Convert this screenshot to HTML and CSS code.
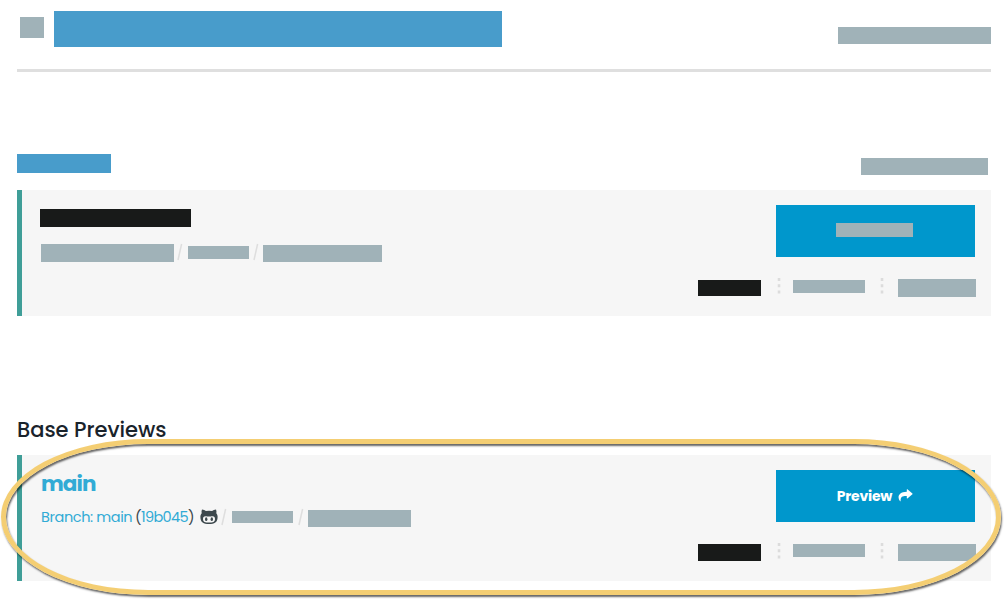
FILE: index.html
```html
<!DOCTYPE html>
<html lang="en">
<head>
<meta charset="utf-8">
<title>Base Previews</title>
<link rel="stylesheet" href="styles.css">
</head>
<body>
<main class="page">
  <header class="header">
    <div class="bar header-icon"></div>
    <div class="bar blue header-title"></div>
    <div class="bar header-link"></div>
  </header>
  <div class="section-head">
    <div class="bar blue section-title"></div>
    <div class="bar section-link"></div>
  </div>
  <section class="card">
    <div class="info">
      <div class="bar dark card-title"></div>
      <div class="meta">
        <div class="bar meta-branch"></div>
        <svg class="slash" width="6" height="18" viewBox="0 0 6 18"><path d="M1 17 4.6 1"/></svg>
        <div class="bar meta-commit"></div>
        <svg class="slash slash-second" width="6" height="18" viewBox="0 0 6 18"><path d="M1 17 4.6 1"/></svg>
        <div class="bar meta-date"></div>
      </div>
    </div>
    <div class="side">
      <div class="button"><div class="bar button-bar"></div></div>
      <div class="actions">
        <div class="bar dark action-first"></div>
        <svg class="dots" width="4" height="18" viewBox="0 0 4 18"><path d="M2 1v3M2 7.2v3M2 13.4v3"/></svg>
        <div class="bar action-second"></div>
        <svg class="dots dots-second" width="4" height="18" viewBox="0 0 4 18"><path d="M2 1v3M2 7.2v3M2 13.4v3"/></svg>
        <div class="bar action-third"></div>
      </div>
    </div>
  </section>
  <h2 class="heading">Base Previews</h2>
  <section class="card base-card">
    <div class="info">
      <h3 class="branch-name">main</h3>
      <div class="meta base-meta">
        <span class="branch">Branch: main</span>
        <span class="commit"><span class="paren">(</span>19b045<span class="paren">)</span></span>
        <svg class="octoface" width="18" height="16" viewBox="0 0 18 16"><path fill="#3d484d" fill-rule="evenodd" d="M2 .5C3.4 .5 4.9 1.3 5.9 2.1Q9 1.5 12.1 2.1C13.1 1.3 14.6 .5 16 .5Q16.8 2.3 16.3 4.2C17.4 5.5 17.7 6.7 17.6 8.3C17.5 13.5 14.5 15 9 15S.5 13.5 .4 8.3C.3 6.7 .6 5.5 1.7 4.2Q1.2 2.3 2 .5ZM5.5 7.2C3.6 7.2 3 8.6 3 10C3 13 5.2 13.5 9 13.5S15 13 15 10C15 8.6 14.4 7.2 12.5 7.2C11 7.2 10.5 7.5 9 7.5S7 7.2 5.5 7.2Z"/><ellipse cx="6.2" cy="10.2" rx="1.2" ry="1.9" fill="#3d484d"/><ellipse cx="11.8" cy="10.2" rx="1.2" ry="1.9" fill="#3d484d"/></svg>
        <svg class="slash" width="6" height="18" viewBox="0 0 6 18"><path d="M1 17 4.6 1"/></svg>
        <div class="bar meta-commit"></div>
        <svg class="slash slash-second" width="6" height="18" viewBox="0 0 6 18"><path d="M1 17 4.6 1"/></svg>
        <div class="bar meta-date"></div>
      </div>
    </div>
    <div class="side">
      <div class="button"><span class="button-label">Preview</span><svg class="share" width="15" height="13" viewBox="0 0 15 13"><path fill="#fff" d="M8.8 .5Q8.8 0 9.4 .3L14.4 4.5Q14.8 4.9 14.4 5.3L9.4 9.4Q8.8 9.7 8.8 9.1V7C4.5 6.9 2.5 7.5 2.6 11.9Q2.5 12.5 1.9 12C-.8 8.5 .1 3.1 8.8 2.8Z"/></svg></div>
      <div class="actions">
        <div class="bar dark action-first"></div>
        <svg class="dots" width="4" height="18" viewBox="0 0 4 18"><path d="M2 1v3M2 7.2v3M2 13.4v3"/></svg>
        <div class="bar action-second"></div>
        <svg class="dots dots-second" width="4" height="18" viewBox="0 0 4 18"><path d="M2 1v3M2 7.2v3M2 13.4v3"/></svg>
        <div class="bar action-third"></div>
      </div>
    </div>
  </section>
  <div class="highlight"></div>
</main>
</body>
</html>
```
FILE: styles.css
```css
* { box-sizing: border-box; }
body { margin: 0; background: #fff; font-family: Poppins, Inter, sans-serif; }
.page { position: relative; width: 1008px; height: 601px; padding: 0 17px; overflow: hidden; }
.bar { flex: none; background: #a0b2b8; }
.blue { background: #489ccb; }
.dark { background: #181a19; }
.header { display: flex; align-items: flex-start; height: 72px; border-bottom: 3px solid #dfdfdf; width: 974px; }
.header-icon { width: 24px; height: 21px; margin: 17px 0 0 3px; }
.header-title { width: 448px; height: 36px; margin: 11px 0 0 10px; }
.header-link { width: 153px; height: 17px; margin: 27px 0 0 auto; }
.section-head { display: flex; justify-content: space-between; align-items: flex-start; width: 971px; height: 118px; padding-top: 82px; }
.section-title { width: 94px; height: 19px; }
.section-link { width: 127px; height: 17px; margin-top: 4px; }
.card { display: flex; justify-content: space-between; width: 974px; height: 126px; padding: 15px 15px 0 18px; background: #f6f6f6; border-left: 5px solid #3f9e98; }
.card-title { width: 151px; height: 18px; margin-top: 4px; }
.meta { display: flex; align-items: flex-start; margin: 16px 0 0 1px; }
.meta-branch { width: 133px; height: 18px; margin-top: 1px; }
.slash { flex: none; margin-left: 3px; }
.slash-second { margin-left: 4px; }
.slash path { fill: none; stroke: #dedede; stroke-width: 1.5; }
.meta-commit { width: 61px; height: 13px; margin: 3px 0 0 5px; }
.meta-date { width: 119px; height: 17px; margin: 2px 0 0 4px; }
.side { width: 278px; }
.button { display: flex; align-items: center; justify-content: center; width: 199px; height: 52px; margin-left: 78px; background: #0097cc; }
.button-bar { width: 77px; height: 14px; margin: 0 2px 2px 0; }
.actions { display: flex; align-items: flex-start; width: 278px; margin-top: 20px; }
.action-first { width: 63px; height: 16px; margin-top: 3px; }
.dots { flex: none; margin-left: 16px; }
.dots-second { margin-left: 15px; }
.dots path { fill: none; stroke: #dcdcdc; stroke-width: 2.6; }
.action-second { width: 72px; height: 13px; margin: 3px 0 0 12px; }
.action-third { width: 78px; height: 18px; margin: 2px 0 0 14px; }
.heading { margin: 98px 0 0; height: 41px; padding-top: 1px; font-size: 21px; font-weight: 500; line-height: 30px; letter-spacing: -.02px; color: #19232b; white-space: nowrap; }
.branch-name { margin: 0 0 0 1px; height: 30px; font-size: 21.5px; line-height: 28px; font-weight: 700; letter-spacing: -.9px; color: #31abd5; }
.base-meta { margin: 7px 0 0 1px; font-size: 14.5px; line-height: 20px; color: #31abd5; white-space: nowrap; }
.branch { width: 94px; letter-spacing: -.4px; }
.commit { width: 64px; letter-spacing: -.65px; }
.paren { color: #3d484d; }
.octoface { flex: none; margin: 2px 0 0 1px; }
.base-meta .slash { margin-top: 1px; }
.base-meta .slash-second { margin-left: 5px; }
.base-meta .meta-commit { height: 12px; margin-top: 4px; }
.base-meta .meta-date { width: 103px; margin-top: 3px; }
.button-label { font-size: 14px; font-weight: 700; line-height: 20px; letter-spacing: -.2px; color: #fff; }
.share { margin: 0 1px 2px 6px; }
.base-card .actions { margin-top: 19px; }
.base-card .action-first { height: 17px; }
.base-card .action-third { height: 17px; margin-top: 3px; }
.base-card .dots { margin-top: 1px; }
.highlight { position: absolute; left: 1px; top: 439px; width: 1000px; height: 156px; border: 5px solid #f4ce73; border-radius: 147px / 78px; box-shadow: 1px 2px 2px rgba(0, 0, 0, .6), inset 1px 2px 2px rgba(0, 0, 0, .6); }
```
